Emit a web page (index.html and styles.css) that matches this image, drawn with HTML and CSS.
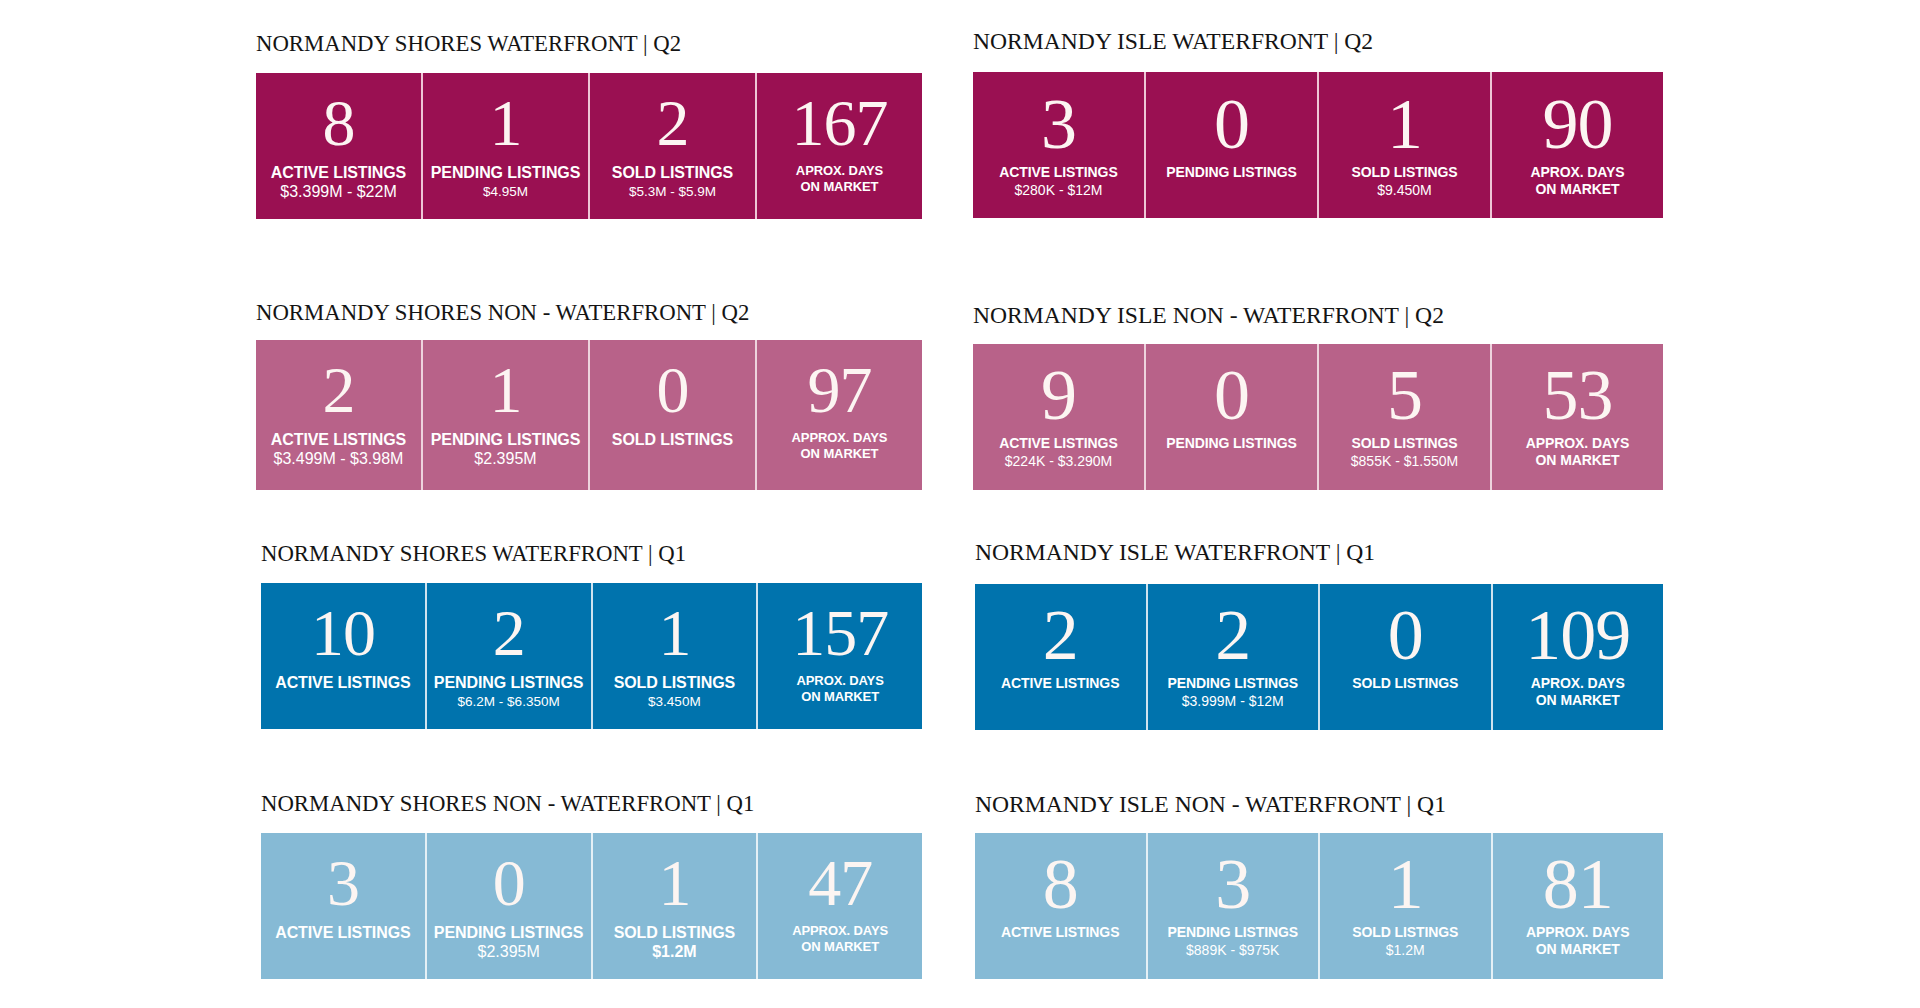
FILE: index.html
```html
<!DOCTYPE html>
<html lang="en">
<head>
<meta charset="utf-8">
<title>Normandy Market Report</title>
<link rel="stylesheet" href="styles.css">
</head>
<body>
<main class="page">

  <section class="sec sec-left sec-l1">
    <h2 class="title">NORMANDY SHORES WATERFRONT | Q2</h2>
    <div class="block block--magenta block--left">
      <div class="cell"><div class="num">8</div><div class="label">ACTIVE LISTINGS</div><div class="sub">$3.399M - $22M</div></div>
      <div class="cell"><div class="num">1</div><div class="label">PENDING LISTINGS</div><div class="sub sub--sm">$4.95M</div></div>
      <div class="cell"><div class="num">2</div><div class="label">SOLD LISTINGS</div><div class="sub sub--sm">$5.3M - $5.9M</div></div>
      <div class="cell"><div class="num">167</div><div class="label label--days">APROX. DAYS<br>ON MARKET</div></div>
    </div>
  </section>

  <section class="sec sec-right sec-r1">
    <h2 class="title">NORMANDY ISLE WATERFRONT | Q2</h2>
    <div class="block block--magenta block--right">
      <div class="cell"><div class="num">3</div><div class="label">ACTIVE LISTINGS</div><div class="sub">$280K - $12M</div></div>
      <div class="cell"><div class="num">0</div><div class="label">PENDING LISTINGS</div></div>
      <div class="cell"><div class="num">1</div><div class="label">SOLD LISTINGS</div><div class="sub">$9.450M</div></div>
      <div class="cell"><div class="num">90</div><div class="label label--days">APROX. DAYS<br>ON MARKET</div></div>
    </div>
  </section>

  <section class="sec sec-left sec-l2">
    <h2 class="title">NORMANDY SHORES NON - WATERFRONT | Q2</h2>
    <div class="block block--pink block--left block--tall">
      <div class="cell"><div class="num">2</div><div class="label">ACTIVE LISTINGS</div><div class="sub">$3.499M - $3.98M</div></div>
      <div class="cell"><div class="num">1</div><div class="label">PENDING LISTINGS</div><div class="sub">$2.395M</div></div>
      <div class="cell"><div class="num">0</div><div class="label">SOLD LISTINGS</div></div>
      <div class="cell"><div class="num">97</div><div class="label label--days">APPROX. DAYS<br>ON MARKET</div></div>
    </div>
  </section>

  <section class="sec sec-right sec-r2">
    <h2 class="title">NORMANDY ISLE NON - WATERFRONT | Q2</h2>
    <div class="block block--pink block--right">
      <div class="cell"><div class="num">9</div><div class="label">ACTIVE LISTINGS</div><div class="sub">$224K - $3.290M</div></div>
      <div class="cell"><div class="num">0</div><div class="label">PENDING LISTINGS</div></div>
      <div class="cell"><div class="num">5</div><div class="label">SOLD LISTINGS</div><div class="sub">$855K - $1.550M</div></div>
      <div class="cell"><div class="num">53</div><div class="label label--days">APPROX. DAYS<br>ON MARKET</div></div>
    </div>
  </section>

  <section class="sec sec-left sec-inset-l sec-l3">
    <h2 class="title">NORMANDY SHORES WATERFRONT | Q1</h2>
    <div class="block block--blue block--left">
      <div class="cell"><div class="num">10</div><div class="label">ACTIVE LISTINGS</div></div>
      <div class="cell"><div class="num">2</div><div class="label">PENDING LISTINGS</div><div class="sub sub--sm">$6.2M - $6.350M</div></div>
      <div class="cell"><div class="num">1</div><div class="label">SOLD LISTINGS</div><div class="sub sub--sm">$3.450M</div></div>
      <div class="cell"><div class="num">157</div><div class="label label--days">APROX. DAYS<br>ON MARKET</div></div>
    </div>
  </section>

  <section class="sec sec-right sec-inset-r sec-r3">
    <h2 class="title">NORMANDY ISLE WATERFRONT | Q1</h2>
    <div class="block block--blue block--right">
      <div class="cell"><div class="num">2</div><div class="label">ACTIVE LISTINGS</div></div>
      <div class="cell"><div class="num">2</div><div class="label">PENDING LISTINGS</div><div class="sub">$3.999M - $12M</div></div>
      <div class="cell"><div class="num">0</div><div class="label">SOLD LISTINGS</div></div>
      <div class="cell"><div class="num">109</div><div class="label label--days">APROX. DAYS<br>ON MARKET</div></div>
    </div>
  </section>

  <section class="sec sec-left sec-inset-l">
    <h2 class="title">NORMANDY SHORES NON - WATERFRONT | Q1</h2>
    <div class="block block--sky block--left">
      <div class="cell"><div class="num">3</div><div class="label">ACTIVE LISTINGS</div></div>
      <div class="cell"><div class="num">0</div><div class="label">PENDING LISTINGS</div><div class="sub">$2.395M</div></div>
      <div class="cell"><div class="num">1</div><div class="label">SOLD LISTINGS</div><div class="sub sub--bold">$1.2M</div></div>
      <div class="cell"><div class="num">47</div><div class="label label--days">APPROX. DAYS<br>ON MARKET</div></div>
    </div>
  </section>

  <section class="sec sec-right sec-inset-r">
    <h2 class="title">NORMANDY ISLE NON - WATERFRONT | Q1</h2>
    <div class="block block--sky block--right">
      <div class="cell"><div class="num">8</div><div class="label">ACTIVE LISTINGS</div></div>
      <div class="cell"><div class="num">3</div><div class="label">PENDING LISTINGS</div><div class="sub">$889K - $975K</div></div>
      <div class="cell"><div class="num">1</div><div class="label">SOLD LISTINGS</div><div class="sub">$1.2M</div></div>
      <div class="cell"><div class="num">81</div><div class="label label--days">APPROX. DAYS<br>ON MARKET</div></div>
    </div>
  </section>

</main>
</body>
</html>
```

FILE: styles.css
```css
html, body {
  margin: 0;
  padding: 0;
  background: #ffffff;
}

body {
  font-family: "Liberation Sans", Arial, sans-serif;
  color: #111;
}

.page {
  display: grid;
  grid-template-columns: 666px 690px;
  grid-template-rows: 270px 241px 252px auto;
  column-gap: 51px;
  padding: 28px 0 0 256px;
  height: 1008px;
  box-sizing: border-box;
}

.sec {
  display: flex;
  flex-direction: column;
  min-width: 0;
}

.sec-l1 { margin-top: 3px; }
.sec-l2 { margin-top: 2px; }
.sec-r2 { margin-top: 4px; }
.sec-l3 { margin-top: 2px; }
.sec-inset-l { margin-left: 5px; }
.sec-inset-r { margin-left: 2px; }

.title {
  margin: 0 0 16px 0;
  font-family: "Liberation Serif", "Times New Roman", serif;
  font-weight: normal;
  font-size: 22.75px;
  line-height: 26px;
  color: #141414;
  white-space: nowrap;
}

.sec-right .title {
  font-size: 23.6px;
}

.sec-l2 .title { margin-bottom: 14px; }
.sec-r1 .title { margin-bottom: 18px; }
.sec-r3 .title { margin-bottom: 19px; }

.block {
  display: grid;
  grid-template-columns: repeat(4, 1fr);
  column-gap: 2px;
  height: 146px;
}

.block--tall { height: 150px; }

.block--magenta { background: #eec6d6; }
.block--magenta .cell { background: #9a1052; }

.block--pink { background: #eed3de; }
.block--pink .cell { background: #b86289; }

.block--blue { background: #cfe3ef; }
.block--blue .cell { background: #0073ad; }

.block--sky { background: #e4f0f6; }
.block--sky .cell { background: #86bad5; }

.cell {
  display: flex;
  flex-direction: column;
  align-items: center;
  text-align: center;
  padding-top: 10px;
  color: #ffffff;
  min-width: 0;
}

.num {
  font-family: "Liberation Serif", "Times New Roman", serif;
  font-size: 66px;
  line-height: 80px;
  height: 80px;
  letter-spacing: -1px;
  color: #fcf5f2;
}

.label {
  font-weight: bold;
  font-size: 16px;
  line-height: 19px;
  letter-spacing: -0.1px;
  white-space: nowrap;
}

.sub {
  font-size: 16px;
  line-height: 19px;
  white-space: nowrap;
}

.sub--sm {
  font-size: 13.5px;
}

.sub--bold {
  font-weight: bold;
}

.label--days {
  font-size: 13px;
  line-height: 16px;
}

.block--right .cell {
  padding-top: 11px;
}

.sec-r1 .block--right .cell {
  padding-top: 12px;
}

.block--right .num {
  font-size: 72px;
}

.block--right .label {
  font-size: 14px;
  line-height: 17px;
}

.block--right .sub {
  font-size: 14px;
  line-height: 18px;
}
```
